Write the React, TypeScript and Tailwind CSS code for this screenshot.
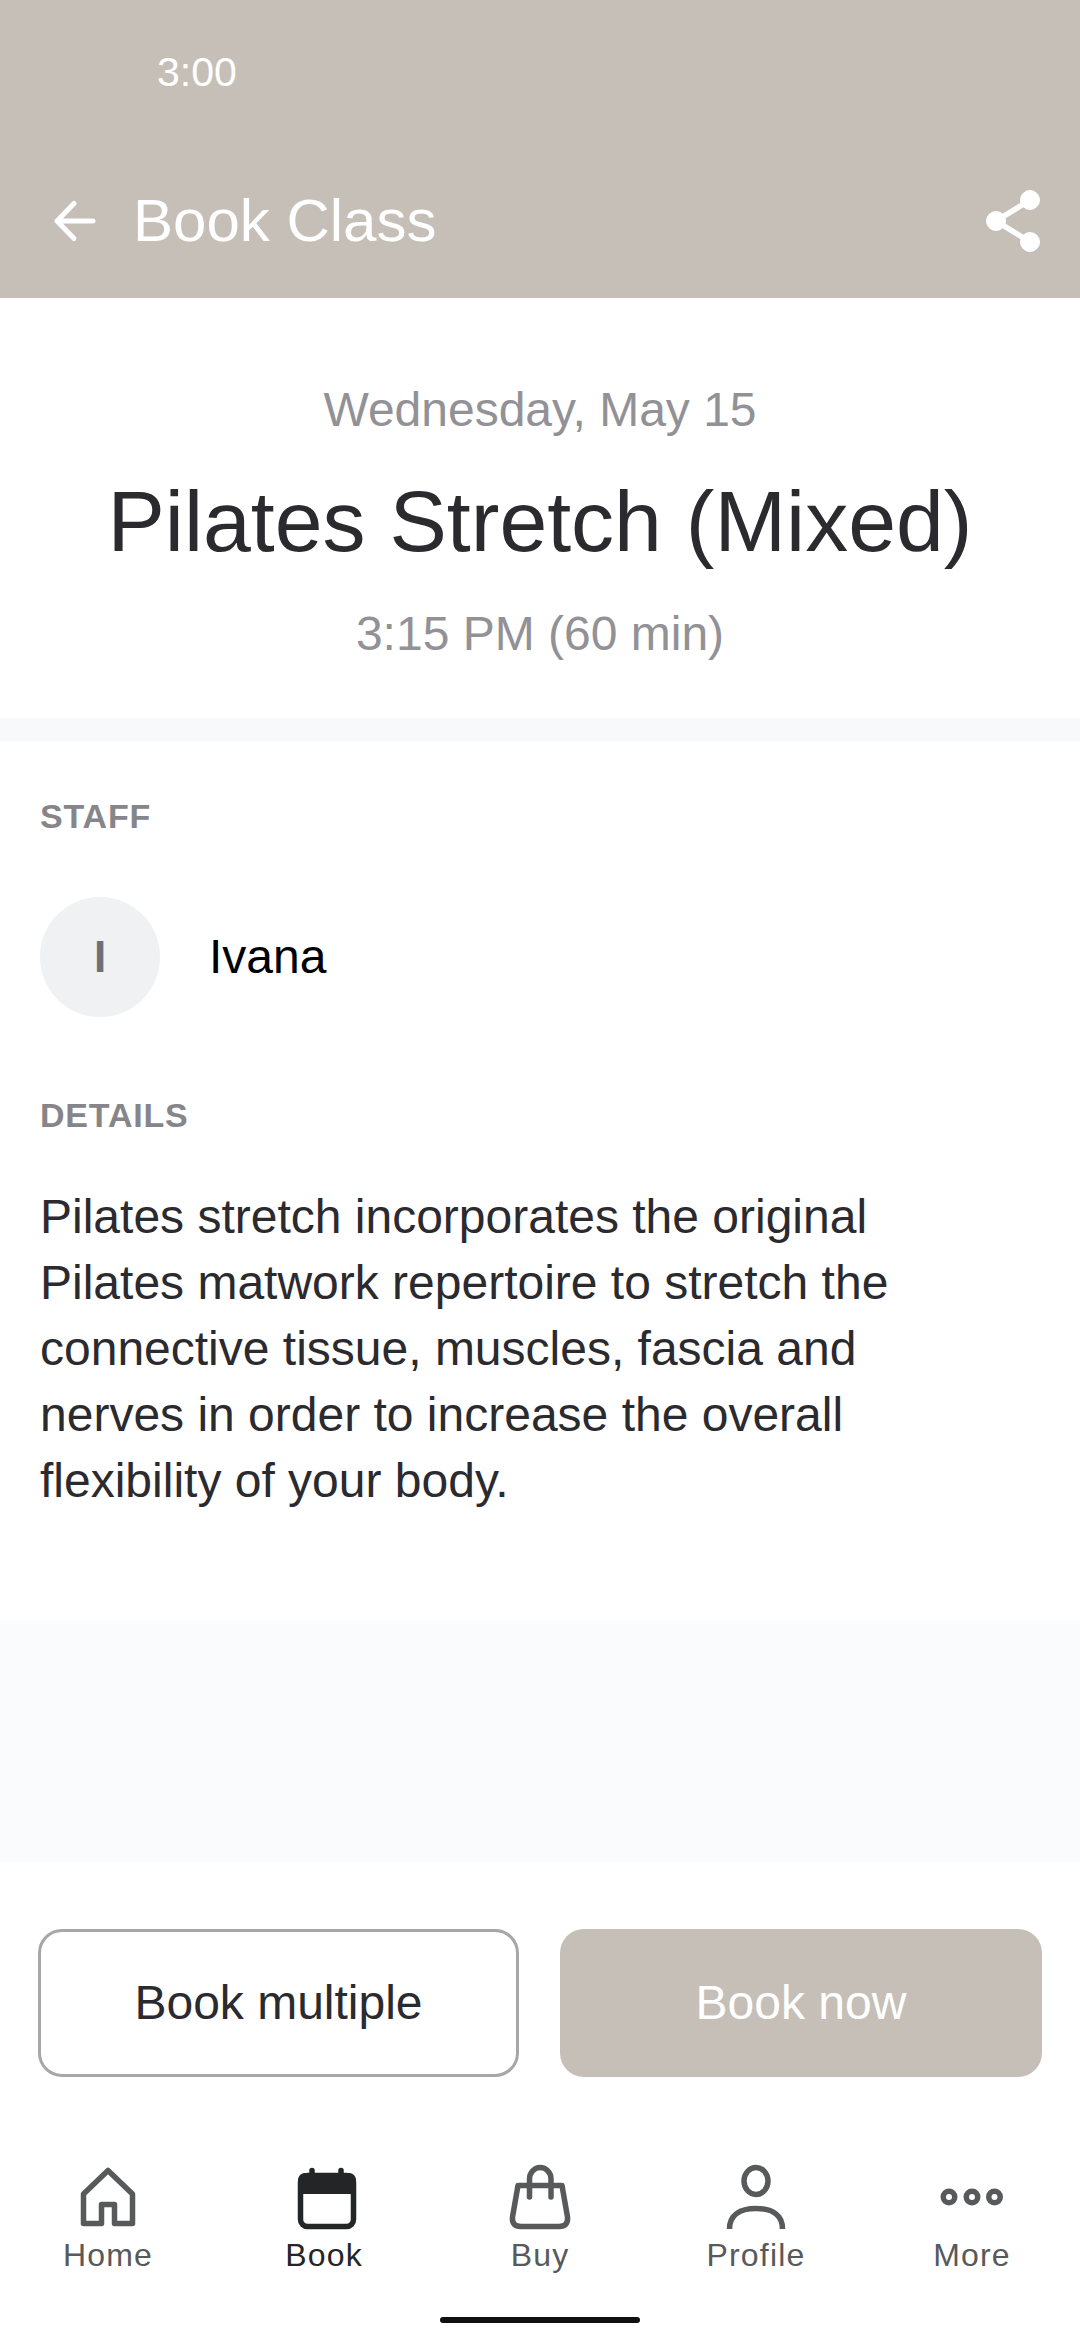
const sans = "font-['Liberation_Sans',Arial,sans-serif]";

function HomeIcon() {
  return (
    <svg width="72" height="72" viewBox="0 0 72 72" fill="none" stroke="currentColor" strokeWidth="5.5" strokeLinejoin="round">
      <path d="M11.5 59.5V30L36 6.5 60.5 30V59.5H42.5V40.5H29.5V59.5Z" />
    </svg>
  );
}

function BookIcon() {
  return (
    <svg width="72" height="72" viewBox="0 0 72 72" fill="none" stroke="currentColor" strokeWidth="5.5" strokeLinecap="round">
      <path d="M24 6.5V12M53 6.5V12" />
      <rect x="12.5" y="11.5" width="53" height="51" rx="7" />
      <path d="M17 9h44a7 7 0 0 1 7 7v14H10V16a7 7 0 0 1 7-7Z" fill="currentColor" stroke="none" />
    </svg>
  );
}

function BuyIcon() {
  return (
    <svg width="72" height="72" viewBox="0 0 72 72" fill="none" stroke="currentColor" strokeWidth="5.5" strokeLinecap="round" strokeLinejoin="round">
      <path d="M14 21.5H58L63.5 53Q64.5 62.5 55 62.5H17Q7.5 62.5 8.5 53Z" />
      <path d="M25.5 33V15a10.75 11.5 0 0 1 21.5 0V33" />
    </svg>
  );
}

function ProfileIcon() {
  return (
    <svg width="72" height="72" viewBox="0 0 72 72" fill="none" stroke="currentColor" strokeWidth="5.5">
      <ellipse cx="36" cy="17" rx="12" ry="13.5" />
      <path d="M9.5 65C9.5 51 20 44.5 36 44.5S62.5 51 62.5 65" />
    </svg>
  );
}

function MoreIcon() {
  return (
    <svg width="72" height="72" viewBox="0 0 72 72" fill="none" stroke="currentColor" strokeWidth="5.5">
      <circle cx="13" cy="33" r="5.75" />
      <circle cx="36" cy="33" r="5.75" />
      <circle cx="58.5" cy="33" r="5.75" />
    </svg>
  );
}

const tabs = [
  { label: "Home", icon: <HomeIcon /> },
  { label: "Book", icon: <BookIcon />, active: true },
  { label: "Buy", icon: <BuyIcon /> },
  { label: "Profile", icon: <ProfileIcon /> },
  { label: "More", icon: <MoreIcon /> },
];

export default function App() {
  return (
    <div className={`${sans} flex h-[2340px] w-[1080px] flex-col overflow-hidden bg-white`}>
      {/* header */}
      <header className="flex h-[298px] shrink-0 flex-col bg-[#c5bfb7] text-white">
        <div className="pl-[157px] pt-[49px] text-[41px] leading-[46px]">3:00</div>
        <div className="mt-[96px] flex h-[60px] items-center pl-[52px] pr-[39px]">
          <svg width="44" height="44" viewBox="0 0 44 44" fill="none" stroke="currentColor" strokeWidth="5" strokeLinecap="round" strokeLinejoin="round">
            <path d="M5 22H41M22 4.5 5 22 22 39.5" />
          </svg>
          <h1 className="ml-[37px] text-[60px] leading-[70px]">Book Class</h1>
          <svg className="ml-auto" width="56" height="64" viewBox="0 0 56 64" fill="currentColor" stroke="currentColor">
            <path d="M45 11 11 32 45 53" fill="none" strokeWidth="5.5" />
            <circle cx="45" cy="11" r="9.5" />
            <circle cx="11" cy="32" r="9.5" />
            <circle cx="45" cy="53" r="9.5" />
          </svg>
        </div>
      </header>

      {/* class summary */}
      <section className="flex h-[420px] shrink-0 flex-col items-center text-center">
        <div className="mt-[84px] text-[48px] leading-[56px] text-[#929196]">Wednesday, May 15</div>
        <h2 className="mt-[35px] text-[86px] leading-[96px] text-[#2b2a2e]">Pilates Stretch (Mixed)</h2>
        <div className="mt-[37px] text-[48px] leading-[56px] text-[#929196]">3:15 PM (60 min)</div>
      </section>
      <div className="h-[24px] shrink-0 bg-[#f8f9fa]" />

      {/* staff and details */}
      <section className="flex h-[879px] shrink-0 flex-col px-[40px]">
        <div className="mt-[55px] text-[34px] font-bold leading-[38px] tracking-[0.8px] text-[#86858a]">STAFF</div>
        <div className="mt-[62px] flex items-center">
          <div className="flex h-[120px] w-[120px] items-center justify-center rounded-full bg-[#eff1f3] text-[44px] font-bold text-[#6e7076]">I</div>
          <div className="ml-[49px] text-[48px] leading-[56px] text-black">Ivana</div>
        </div>
        <div className="mt-[79px] text-[34px] font-bold leading-[38px] tracking-[0.8px] text-[#86858a]">DETAILS</div>
        <p className="mt-[50px] w-[880px] text-[48px] leading-[66px] text-[#2b2a2e]">
          Pilates stretch incorporates the original Pilates matwork repertoire to stretch the connective tissue, muscles, fascia and nerves in order to increase the overall flexibility of your body.
        </p>
      </section>
      <div className="h-[241px] shrink-0 bg-[#fafbfc]" />

      {/* actions */}
      <div className="mt-[67px] flex h-[148px] shrink-0 gap-[41px] px-[38px]">
        <button className="h-full w-[481px] rounded-[24px] border-[3px] border-[#a8a6a9] text-[48px] text-[#2b2a2e]">Book multiple</button>
        <button className="h-full w-[482px] rounded-[24px] bg-[#c5bfb7] text-[48px] text-white">Book now</button>
      </div>

      {/* tab bar */}
      <nav className="mt-[87px] grid grid-cols-5">
        {tabs.map((t) => (
          <div key={t.label} className={`flex flex-col items-center ${t.active ? "text-[#232527]" : "text-[#58595b]"}`}>
            {t.icon}
            <span className="-mt-px text-[32px] leading-[40px] tracking-[1.2px]">{t.label}</span>
          </div>
        ))}
      </nav>
      <div className="mx-auto mt-[42px] h-[6px] w-[200px] rounded-full bg-[#111114]" />
    </div>
  );
}
